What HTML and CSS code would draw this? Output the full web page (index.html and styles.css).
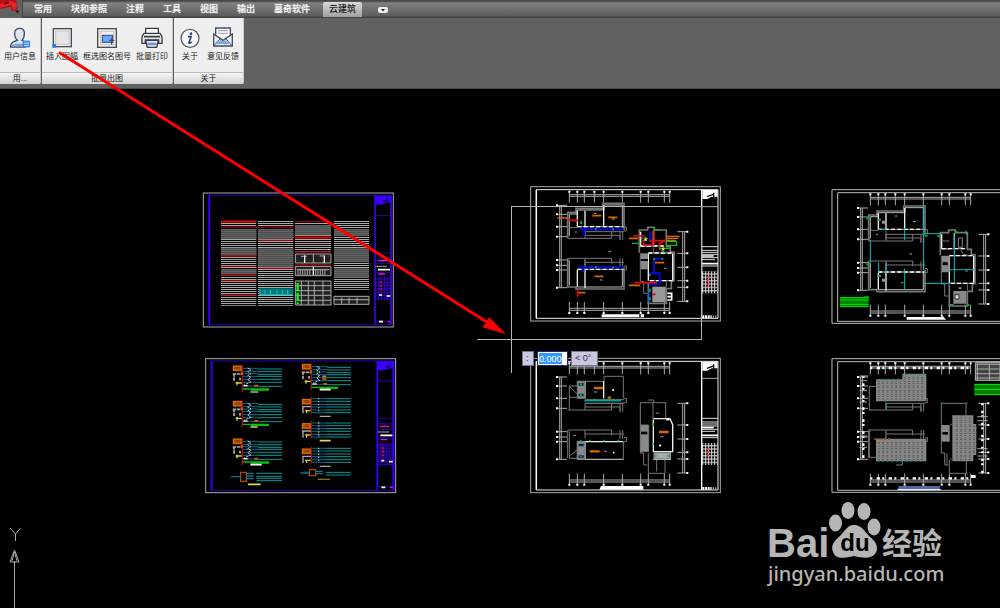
FILE: index.html
```html
<!DOCTYPE html>
<html lang="zh-CN">
<head>
<meta charset="utf-8">
<title>云建筑</title>
<link rel="stylesheet" href="styles.css">
</head>
<body>
<header class="ribbon">
  <svg class="app-logo" width="24" height="16" viewBox="0 0 72 48" aria-hidden="true">
    <path d="M0 0H48L53 30L36 33L31 20L0 27Z" fill="#b80f14"/>
    <path d="M0 13L30 2L48 8L50 27L38 29L34 14L0 24Z" fill="#e5222a"/>
    <path d="M12 8L24 3L28 10L12 15Z" fill="#741015"/>
    <path d="M46 32H59L52 40Z" fill="#111"/>
  </svg>
  <nav class="tabs">
    <button class="tab">常用</button>
    <button class="tab">块和参照</button>
    <button class="tab">注释</button>
    <button class="tab">工具</button>
    <button class="tab">视图</button>
    <button class="tab">输出</button>
    <button class="tab">墓奇软件</button>
    <button class="tab tab-active">云建筑</button>
    <button class="tab-menu" aria-label="菜单"><svg width="10" height="6" viewBox="0 0 10 6"><rect width="10" height="6" rx="2" fill="#e8ecf0"/><path d="M3 2h4L5 4.500Z" fill="#222"/></svg></button>
  </nav>
  <div class="panels">
    <section class="panel">
      <div class="tools">
        <button class="tool"><svg class="icon" viewBox="0 0 72 72"><path d="M8 60Q8 48 28 43Q19 34 20 20Q22 7 35 7Q48 7 49 20Q50 34 42 43Q50 45 52 50V63H8Z" fill="#dfe7f6" stroke="#3c4a66" stroke-width="4"/><path d="M10 57Q30 48 50 56V62H10Z" fill="#7f9fd6"/><rect x="44" y="44" width="22" height="20" fill="#3486ea"/><path d="M48 51H63M48 58H63" stroke="#d8eaff" stroke-width="3"/></svg><span>用户信息</span></button>
      </div>
      <h2 class="panel-title">用...</h2>
    </section>
    <section class="panel">
      <div class="tools">
        <button class="tool"><svg class="icon" viewBox="0 0 72 72"><rect x="10" y="8" width="54" height="54" fill="#f1f1f1" stroke="#454d58" stroke-width="4"/><rect x="17" y="15" width="40" height="40" fill="#e6e6e6" stroke="#c4c4c4" stroke-width="3"/><rect x="7" y="54" width="11" height="11" fill="#2d7bea"/></svg><span>插入图幅</span></button>
        <button class="tool"><svg class="icon" viewBox="0 0 72 72"><rect x="8" y="8" width="56" height="56" fill="#f2eee6" stroke="#454d58" stroke-width="4"/><rect x="16" y="16" width="40" height="40" fill="none" stroke="#ccc6bd" stroke-width="3"/><rect x="22" y="28" width="31" height="21" fill="#6ba7f7" stroke="#1f4a8c" stroke-width="3"/><path d="M42 43H58M50 35V57" stroke="#28466e" stroke-width="3"/></svg><span>框选图名图号</span></button>
        <button class="tool"><svg class="icon" viewBox="0 0 72 72"><path d="M17 24V7H55V24" fill="#fff" stroke="#353c46" stroke-width="4"/><path d="M12 22H60L66 31V52H56V42H16V52H6V31Z" fill="#e5e9ed" stroke="#353c46" stroke-width="4"/><path d="M12 32H60" stroke="#353c46" stroke-width="5"/><path d="M17 43H55L50 64H22Z" fill="#dce7f5" stroke="#353c46" stroke-width="4"/><path d="M22 50H50L48 58H24Z" fill="#7594c2"/></svg><span>批量打印</span></button>
      </div>
      <h2 class="panel-title">批量出图</h2>
    </section>
    <section class="panel">
      <div class="tools">
        <button class="tool"><svg class="icon" viewBox="0 0 72 72"><circle cx="36" cy="37" r="27" fill="#f8faff" stroke="#59616d" stroke-width="4"/><circle cx="39" cy="23" r="4" fill="#253e70"/><path d="M30 32H39L33 51Q36 53 41 48" fill="none" stroke="#253e70" stroke-width="5"/></svg><span>关于</span></button>
        <button class="tool"><svg class="icon" viewBox="0 0 72 72"><path d="M14 30V6H58V30" fill="#fff" stroke="#46505e" stroke-width="4"/><path d="M21 14H51M21 22H51" stroke="#9caec8" stroke-width="4"/><path d="M8 24L36 43L64 24V60H8Z" fill="#e2ecfa" stroke="#46505e" stroke-width="4"/><path d="M8 60L28 38M64 60L44 38" stroke="#46505e" stroke-width="3"/><path d="M14 54L30 42L36 46L42 42L58 54Z" fill="#84a9dc"/></svg><span>意见反馈</span></button>
      </div>
      <h2 class="panel-title">关于</h2>
    </section>
  </div>
</header>

<main class="canvas">
  <svg class="drawing" width="1000" height="519" viewBox="0 89 1000 519">
    <defs>
      <pattern id="rows" width="6" height="6" patternUnits="userSpaceOnUse"><path d="M0 1.500H6" stroke="#aaa" stroke-width="3"/></pattern>
      <pattern id="dense" width="3" height="6" patternUnits="userSpaceOnUse"><rect width="3" height="6" fill="#4c4c4c"/><path d="M0 1H3" stroke="#777" stroke-width="2"/></pattern>
      <pattern id="roof" width="13" height="13" patternUnits="userSpaceOnUse"><rect width="13" height="13" fill="#858585"/><path d="M3 4H8M3 9H8" stroke="#4c4c4c" stroke-width="3"/></pattern>
      <pattern id="grid" width="9" height="10" patternUnits="userSpaceOnUse"><path d="M0 2H9M2 0V10" stroke="#3500dc" stroke-width="3"/></pattern>
      <pattern id="wgrid" width="9" height="10" patternUnits="userSpaceOnUse"><path d="M0 2H9M2 0V10" stroke="#ddd" stroke-width="3"/></pattern>

      <g id="blue-frame" fill="none">
        <rect x="25" y="24" width="570" height="402" stroke="#aaa" stroke-width="3"/>
        <path d="M42 31H590V419H42Z" stroke="#2a00a8" stroke-width="3"/>
        <path d="M43 31V419M540 31V419M588 31V419" stroke="#3900ff" stroke-width="5"/>
        <path d="M541 32H588V52L574 54L560 59H541Z" fill="#3900ff"/>
        <path d="M565 48H578V38" stroke="#08003c" stroke-width="4"/>
        <path d="M540 91H588M540 203H588M540 219H588M540 236H588M540 262H588M540 408H588" stroke="#2a00b0" stroke-width="3"/>
        <rect x="540" y="276" width="48" height="68" fill="url(#grid)"/>
        <path d="M548 227H576M550 267H570M578 410H586" stroke="#f0f" stroke-width="4"/>
        <path d="M541 244H576" stroke="#aaa" stroke-width="3"/><path d="M549 254H585M552 330H561M575 333H586M552 410H564" stroke="#fff" stroke-width="5"/>
        <path d="M557 288V322" stroke="#c00040" stroke-width="6" stroke-dasharray="7 4"/>
      </g>

      <g id="white-frame" fill="none">
        <rect x="17" y="20" width="569" height="403" stroke="#aaa" stroke-width="3"/>
        <path d="M34 29H579V415H34Z" stroke="#eee" stroke-width="3"/><path d="M34 29V415M530 29V415" stroke="#fff" stroke-width="4"/>
        <path d="M532 30H578V50H560L547 57H532Z" fill="#fff"/><path d="M546 50L565 43M566 38V54M556 54H576" stroke="#111" stroke-width="4"/>
        <path d="M530 80H579" stroke="#aaa" stroke-width="3"/>
        <path d="M530 200H579M530 211H579M530 217H579M530 223H579M530 233H579M530 239H570M530 258H579" stroke="#ddd" stroke-width="3"/>
        <path d="M530 228H566M530 251H579" stroke="#fff" stroke-width="5"/>
        <rect x="531" y="274" width="47" height="66" fill="url(#wgrid)"/>
        <path d="M548 288V320" stroke="#e22" stroke-width="6" stroke-dasharray="6 4"/>
        <path d="M532 410H560" stroke="#fff" stroke-width="8" stroke-dasharray="6 2"/><path d="M563 410H578" stroke="#c8c" stroke-width="7" stroke-dasharray="4 3"/>
      </g>

      <g id="axes" fill="none" stroke="#aaa" stroke-width="3">
        <path d="M133 44H434M133 49H434M133 385H434M133 391H434M104 76V323M109 76V323M473 155V364M479 155V364"/>
        <path d="M133 34V68M157 34V68M178 34V68M208 34V68M236 34V68M292 34V68M347 34V68M370 34V68M418 34V68M434 34V68M133 366V400M157 366V400M178 366V400M236 366V400M292 366V400M347 366V400M370 366V400M418 366V400M434 366V400"/>
        <path d="M96 76H126M96 103H126M96 140H126M96 170H126M96 240H126M96 256H126M96 270H126M96 323H126M457 155H487M457 220H487M457 262H487M457 302H487M457 322H487M457 364H487"/>
        <path stroke="#fff" stroke-width="6" d="M130 35h6m18 0h6m15 0h6m24 0h6m22 0h6m50 0h6m49 0h6m17 0h6m42 0h6m10 0h6M130 399h6m18 0h6m15 0h6m52 0h6m50 0h6m49 0h6m17 0h6m42 0h6m10 0h6M93 76h6m-6 27h6m-6 37h6m-6 30h6m-6 70h6m-6 16h6m-6 14h6m-6 53h6M484 155h6m-6 65h6m-6 42h6m-6 40h6m-6 20h6m-6 42h6"/>
      </g>

      <g id="stairs" fill="none" stroke="#777" stroke-width="3">
        <path d="M128 175H260V155M180 155H297M180 166H285V180M285 155V180M293 155V180M128 235H260V251M128 235V320M180 235V260M180 247H297M285 235V262M293 235V262M297 140H304V153H297M297 258H304V270H297M180 175V155"/>
        <path d="M346 220V304H356V340H367"/>
      </g>

      <g id="walls" fill="none" stroke="#777" stroke-width="3">
        <path stroke-width="5" d="M128 175V97H153V85H233V70H297V150M128 235V321H153V327H297V262M343 218V150H368V142H388V150H424V200H436V216H447V303H439V326H424V370H370V306"/>
        <path d="M133 168V102H157V90H237V75H292V137M133 316V241M157 321H292V268" stroke="#bbb"/>
        <path stroke="#eee" stroke-width="4" d="M157 92V140M180 92V140M236 76V137M157 270V320M180 270V324M347 155V198H370M385 152V198M370 220V302M443 220V300"/>
        <path stroke="#777" stroke-width="4" d="M157 140H295M157 268H295M347 198H418M370 219H443M374 302H443"/>
        <path stroke="#fff" stroke-width="4" stroke-dasharray="12 7" d="M157 140H295M157 268H295M347 198H418M370 219H443M374 302H443"/>
        <path d="M133 143H157M347 175H370M385 203V218M405 203L412 215L430 218M424 305V322M180 140V170M180 240V270"/>
        <path stroke="#aaa" d="M207 100H214M260 117H270M225 300H232M418 265H425M150 156H156M250 214H258"/>
      </g>

      <g id="circuit" fill="none">
        <rect x="115" y="48" width="26" height="14" fill="#b85400" stroke="#ed7600" stroke-width="3"/>
        <path d="M122 52H135M122 57H135" stroke="#653100" stroke-width="2"/>
        <path d="M142 47V126" stroke="#b1080e" stroke-width="4"/>
        <path d="M113 72H142M117 70V92M135 83V91" stroke="#aaa" stroke-width="5" stroke-dasharray="10 2"/><path d="M122 99H140M126 95V106" stroke="#ddd719" stroke-width="4"/>
        <path d="M144 55H189M144 64H189M144 71H189M144 79H189M144 88H189M144 97H189M144 108H189" stroke="#006e91" stroke-width="3"/>
        <path d="M189 57H261M189 65H261M189 73H261M189 79H261M189 88H261M189 97H261M189 109H261" stroke="#0a9999" stroke-width="3"/>
        <path d="M158 54L168 59L158 65L168 71L158 77L168 82L158 89L168 96L148 104" stroke="#ccc" stroke-width="3" stroke-dasharray="7 3"/>
        <path d="M145 107H158" stroke="#eee" stroke-width="4"/><path d="M178 107H189M140 66V75" stroke="#d06000" stroke-width="6"/>
        <path d="M143 117H222M167 120H222" stroke="#00c310" stroke-width="4"/>
      </g>
      <g id="small-circuit" fill="none">
        <rect x="322" y="148" width="25" height="14" fill="#b85400" stroke="#ed7600" stroke-width="3"/>
        <path d="M329 152H342M329 157H342" stroke="#653100" stroke-width="2"/>
        <path d="M349 141V192" stroke="#b1080e" stroke-width="4"/><path d="M321 170H348M324 170V190" stroke="#aaa" stroke-width="4"/><path d="M330 182H347M335 180V190" stroke="#d5cf1b" stroke-width="4"/>
        <path d="M351 146H393M351 154H393M351 163H393M351 171H393M351 180H393M351 188H393" stroke="#006e91" stroke-width="3"/>
        <path d="M393 146H468M393 154H468M393 163H468M393 171H468M393 180H468M393 188H468" stroke="#0a9999" stroke-width="3"/>
        <path d="M371 144V190" stroke="#aaa" stroke-width="4" stroke-dasharray="4 5"/>
      </g>
    </defs>

    <g transform="translate(195 185) scale(.33333)">
      <use href="#blue-frame"/>
      <path d="M78 108H184V362H78ZM189 108H295V362H189ZM300 108H408V204H300ZM417 108H522V314H417Z" fill="url(#rows)"/>
      <path d="M78 132H184V162H78ZM78 188H184V212H78ZM78 252H184V268H78ZM189 132H295V162H189ZM189 190H295V246H189ZM300 120H408V151H300ZM417 132H522V154H417ZM417 190H522V232H417ZM417 250H522V278H417Z" fill="url(#dense)"/>
      <path d="M78 110H184M300 158H408" stroke="#f00" stroke-width="5"/><path d="M78 127H184M78 213H184M78 244H184M78 270H184M78 287H184M78 330H184M189 127H295M189 166H295M189 250H295M300 110H408M300 201H408M300 239H408" stroke="#990006" stroke-width="4"/>
      <path d="M192 310H294V330H192Z" fill="#007779"/><path d="M192 329H294M195 312V328M210 314V328M226 314V328M246 314V328M262 314V328M278 314V328" stroke="#00caca" stroke-width="3"/>
      <g fill="#222" stroke="#aaa" stroke-width="3"><path d="M301 207H408V234H301ZM301 244H408V272H301ZM301 288H408V360H301ZM417 334H522V358H417Z"/><path d="M318 214H335M355 208V234M374 213H390M305 254H403M309 253V272M316 253V272M323 253V272M330 253V272M337 253V272M344 253V272M362 253V272M369 253V272M376 253V272M383 253V272M390 253V272M301 302H408M301 317H408M301 331H408M301 346H408M319 288V360M340 288V360M358 288V360M384 288V360M417 344H522M440 338V358M462 338V358M486 338V358"/></g>
      <path d="M329 211V234M355 245V270M388 212V234" stroke="#eee" stroke-width="4"/><path d="M308 294V358" stroke="#11f216" stroke-width="7" stroke-dasharray="25 4"/>
    </g>

    <g transform="translate(195 350) scale(.33333)">
      <g transform="translate(7 2)"><use href="#blue-frame"/></g>
      <use href="#circuit"/><use href="#circuit" transform="translate(0 106)"/><use href="#circuit" transform="translate(0 219)"/><use href="#circuit" transform="translate(207 -5)"/>
      <use href="#small-circuit"/><use href="#small-circuit" transform="translate(0 73)"/><use href="#small-circuit" transform="translate(0 149)"/>
      <g fill="none"><path d="M166 126H190M374 199H407M374 349H407" stroke="#aaa" stroke-width="4"/><path d="M166 231H188M374 272H407M159 403H197" stroke="#d8d36d" stroke-width="5"/><path d="M166 344H200M374 119H407" stroke="#fff" stroke-width="5"/><path d="M368 388H405" stroke="#77750c" stroke-width="4"/>
      <path d="M137 367H154V394H137ZM343 359H362V377H343Z" stroke="#a64b00" stroke-width="4"/><path d="M108 380H137M156 370H176M156 378H176M156 386H176M316 369H343M363 364H384M363 371H384" stroke="#007897" stroke-width="4"/><path d="M184 370H261M184 379H261M184 385H261M184 392H261M393 367H468M393 375H468" stroke="#009999" stroke-width="3"/><path d="M382 79H394M382 87H394" stroke="#ef7500" stroke-width="5"/></g>
    </g>

    <g transform="translate(525 180) scale(.33333)">
      <use href="#white-frame"/><use href="#axes"/><use href="#stairs"/><use href="#walls"/>
      <path d="M347 220H369V268H347Z" fill="#888"/><path d="M347 240H369" stroke="#000" stroke-width="6"/><path d="M382 320H422V366H382Z" fill="#999"/>
      <g fill="none"><path d="M164 148H295M178 148V170M160 262H295M175 262V275M387 235V280H372M387 236H412M387 280H404V310M372 313H404M375 155V185M374 325V365" stroke="#0009e0" stroke-width="6"/>
      <path d="M210 148h5m47 0h5M210 262h5m47 0h5M385 237h5m20 0h5M372 285h5M168 124v9M374 327v9m0 16v9" stroke="#00b51a" stroke-width="6"/>
      <path d="M202 107H229M250 112H277M208 289H235M390 248H418M97 114H126M158 338H181M312 175H340M312 316H345" stroke="#dc6500" stroke-width="5"/><path d="M424 169H464M424 175H461M424 181H453" stroke="#e56a00" stroke-width="4"/>
      <path d="M127 121H160M158 329V350M325 168H360M387 153V195H355V180M373 182H420L404 190V210M328 308H396M382 343H392" stroke="#e80909" stroke-width="5"/>
      <path d="M321 190H346M424 184H455V196H424M385 149H402M402 205H436M362 170L357 184M414 202V215M425 340H443" stroke="#00c11b" stroke-width="4"/><path d="M359 179h7M412 207h6" stroke="#ffdf24" stroke-width="7"/><path d="M427 340H442M427 350H440M427 360H442M440 340V362" stroke="#fff" stroke-width="5"/><path d="M230 407H343M347 407H357" stroke="#fff" stroke-width="9"/></g>
    </g>

    <g transform="translate(525 350) scale(.33333)">
      <g transform="translate(0 5)"><use href="#white-frame"/><use href="#axes"/><use href="#stairs"/></g>
      <g fill="none" stroke="#777" stroke-width="3"><path d="M133 178V108H157V94H237V79H295V145M133 243V325H157M157 328H295V275M133 109L157 132M133 142H157M133 318L157 300M346 226V158H422V204M370 150H386V158M370 310V370H420V328M384 158V210M395 330V365M443 224V305M180 149H297M180 160H297"/>
      <path d="M180 94V145M236 94V145M157 275H295M180 275V328M385 210V305H443V224L435 206H385M385 328H435V305" stroke="#eee" stroke-width="4"/><path d="M157 275V328H295" stroke="#bbb"/>
      <path d="M157 94H180V145H157ZM157 275H180V328H157ZM347 225H371V305H347Z" fill="#888"/><path d="M387 308H433V327H387Z" fill="#aaa"/><path d="M348 249H367" stroke="#000" stroke-width="8"/><path d="M161 103H176M161 135H176M161 285H176M161 320H176" stroke="#002870" stroke-width="8"/><path d="M178 152H288" stroke="#00a3a3" stroke-width="5"/>
      <path d="M207 114H234M194 304H224M402 246H431M248 143H258" stroke="#d86600" stroke-width="7"/><path d="M165 103h6m-6 32h6m35 14h5m25 0h5m23 0h5M165 272h5m22 0h5m38 0h5m37 0h5M166 320h5M384 220v8m0 50v6M389 318h6m30 0h6" stroke="#00bc23" stroke-width="5"/>
      <path d="M262 118h5v4h-5ZM264 306h4v4h-4ZM403 284h5v5h-5ZM424 206h9v5h-9Z" fill="#fff" stroke="#eee" stroke-width="1"/><path d="M207 126H217M237 304H246M392 189H402M406 260H415M145 256H153" stroke="#999"/></g>
      <path d="M228 408H355V419H223Z" fill="#fff"/>
    </g>

    <g transform="translate(825 180) scale(.33333)">
      <g transform="translate(4 9)"><path d="M600 20H17V421H600M600 415H34V29H600" fill="none" stroke="#bbb" stroke-width="3"/></g>
      <g transform="translate(3 8)"><use href="#axes"/><use href="#stairs"/><use href="#walls"/></g>
      <path d="M351 227H374V277H351ZM385 333H424V371H385Z" fill="#888"/><path d="M353 251H368" stroke="#000" stroke-width="9"/><path d="M390 344H402V357H390Z" fill="#ddd" stroke="#333" stroke-width="3"/>
      <g fill="none"><path d="M136 180V247M296 73V270M297 161H347M388 163V310M373 269H447M297 310H374M161 148H183M239 148V180M161 248V278M239 265V329M183 248V278M423 151V164M375 374H386" stroke="#00bfc4" stroke-width="3"/><path d="M124 115h8m28 4h8M124 253h8m28 35h8M300 167h8m30 1h8M389 156h8M425 375h8M115 352h17" stroke="#00b317" stroke-width="6"/><path d="M400 174H412V202H400Z" stroke="#888" stroke-width="3"/><path d="M171 122h12v9h-12ZM171 296h12v9h-12ZM401 322h8v5h-8Z" fill="#999"/></g>
      <path d="M45 351H131V381H45Z" fill="#008000"/><path d="M45 353H131M45 360H131M45 373H131M45 380H131" stroke="#00e500" stroke-width="3"/><path d="M245 411H353V407L363 419H245Z" fill="#fff"/>
    </g>

    <g transform="translate(825 350) scale(.33333)">
      <g transform="translate(4 6)"><path d="M600 20H17V421H600M600 415H34V29H600" fill="none" stroke="#bbb" stroke-width="3"/></g>
      <g transform="translate(3 5)"><use href="#axes"/><use href="#stairs"/></g>
      <g fill="none"><path d="M136 54H438M136 385H438" stroke="#fff" stroke-width="7" stroke-dasharray="6 13 10 7"/><path d="M115 78V330M472 160V370" stroke="#fff" stroke-width="7" stroke-dasharray="6 16 8 6"/><path d="M104 78H130M104 92H126M104 122H126M104 156H126M104 258H126M104 292H126M457 200H488M457 212H488M457 296H488M457 318H488" stroke="#aaa" stroke-width="3"/>
      <path d="M133 178V109H155M133 243V322H155M349 225V160H423V200M373 330V370H424V332M183 158V178M213 345H232V333M366 310V346" stroke="#777" stroke-width="3"/>
      <path d="M155 90H234V73H302V152H155ZM155 268H302V332H155ZM384 198H443V224H452V313H443V332H384Z" fill="url(#roof)"/><path d="M155 90H234V73H302V152H155ZM155 268H302V332H155ZM384 198H443V224H452V313H443V332H384Z" stroke="#858585" stroke-width="4"/><path d="M349 225H374V275H349Z" fill="#888"/><path d="M352 250H369" stroke="#000" stroke-width="8"/>
      <path d="M160 88H232M240 73H300M183 152V175M183 245V268M158 333H298M375 223H385M375 328H385M132 109h5m-5 70h5M132 243h5m210-84h5m70 0h5m-54 211h5m45 0h5" stroke="#008a8e" stroke-width="4" stroke-dasharray="5 9"/><path d="M147 267H195" stroke="#b34c00" stroke-width="4" stroke-dasharray="8 6"/></g>
      <path d="M448 102H525V135H448Z" fill="#008000"/><path d="M448 103H525M448 118H525M448 133H525" stroke="#00ef00" stroke-width="3"/><path d="M451 38H525V91H451Z" fill="#444" stroke="#bbb" stroke-width="3"/><path d="M451 43H525M451 57H525M451 71H525M451 84H525M457 42V90M493 42V90" stroke="#aaa" stroke-width="3"/><path d="M222 408H345V418H218Z" fill="#5268ac"/><path d="M218 419H347" stroke="#eee" stroke-width="4"/><path d="M438 375H452V384H438Z" fill="#fff"/>
    </g>

    <g class="crosshair"><path d="M511.500 206V373M477 339.500H701M511 206.500H701M701.500 206V340"/></g>
    <g fill="none" stroke="#aaa"><path d="M10 528L15.500 534V541M20.500 528L15.500 534M14.500 561V608M14.500 550L10 562H19ZM14.500 552L12 561M14.500 552L17 561"/></g>

    <g class="watermark">
      <text x="767" y="557" class="brand">Bai</text>
      <ellipse cx="835.500" cy="523" rx="6.500" ry="8.500"/><ellipse cx="848" cy="510.500" rx="6.500" ry="8.500"/><ellipse cx="864" cy="511.500" rx="6.500" ry="8.500"/><ellipse cx="874" cy="527" rx="6.500" ry="8.500"/>
      <path d="M854 525C862 525 865 532 870 537C877 542 879 549 875 554C871 559 863 558 854 556C844 558 836 560 833 552C830 545 835 540 840 536C845 531 847 525 854 525Z"/>
      <text x="855" y="551" text-anchor="middle" class="du">du</text>
      <text x="882" y="554" class="experience">经验</text>
      <text x="768" y="581" class="address">jingyan.baidu.com</text>
    </g>
  </svg>
  <form class="coordinate">
    <label for="distance">:</label>
    <span class="field"><input id="distance" value="0.000"></span>
    <output>&lt; 0°</output>
  </form>
</main>
<svg class="pointer" width="520" height="345" viewBox="0 0 520 345" aria-hidden="true"><path d="M60 53L490 324" stroke="#f00" stroke-width="3" stroke-linecap="round"/><path d="M506 334L489 317L487 322L482 327Z" fill="#f00"/></svg>
</body>
</html>
```
FILE: styles.css
```css
* { box-sizing: border-box; }
body {
  margin: 0;
  min-height: 100vh;
  display: flex;
  flex-direction: column;
  position: relative;
  background: #000;
  font-family: "Liberation Sans", "Noto Sans CJK SC", sans-serif;
}
button {
  border: 0;
  padding: 0;
  background: none;
  font: inherit;
  color: inherit;
}
.ribbon {
  position: relative;
  height: 89px;
  background: #616161;
  border-bottom: 1px solid #484848;
}
.app-logo { position: absolute; left: 0; top: 0; }
.tabs {
  display: flex;
  gap: 7px;
  height: 18px;
  margin-left: 22px;
  padding: 2px 0 0 5px;
  background: linear-gradient(#484848 0 1px, #808080 3px, #5c5c5c 16px, #444 17px);
  border-left: 1px solid #444;
  color: #f2f2f2;
  font-size: 9px;
  font-weight: 500;
}
.tab {
  height: 15px;
  padding: 0 6px;
  line-height: 15px;
  white-space: nowrap;
  text-shadow: 0 0 1px #ddd;
}
.tab-active {
  color: #222;
  background: linear-gradient(#d9d9d9, #a0a0a0);
  border-radius: 2px 2px 0 0;
  text-shadow: none;
}
.tab-menu { display: flex; align-items: center; margin-left: 9px; }
.panels { display: flex; gap: 1px; }
.panel {
  display: flex;
  flex-direction: column;
  background: #efefef;
  border-right: 1px solid #c8c8c8;
  border-radius: 0 0 2px 2px;
  color: #222;
  font-size: 8px;
}
.tools {
  display: flex;
  gap: 5px;
  height: 54px;
  padding: 8px 4px 0;
}
.tool {
  display: flex;
  flex-direction: column;
  align-items: center;
  gap: 1px;
  min-width: 24px;
  line-height: 12px;
  white-space: nowrap;
}
.icon { width: 24px; height: 24px; }
.panel-title {
  margin: 0;
  height: 12px;
  border-top: 1px solid #bbb;
  background: linear-gradient(#f5f5f5, #cfd3d3);
  font-size: 8px;
  line-height: 12px;
  font-weight: 400;
  text-align: center;
}
.canvas { position: relative; flex: 1; overflow: hidden; background: #000; }
.drawing { display: block; }
.crosshair { fill: none; stroke: #b5b5b5; }
.watermark { fill: #b5b5b5; }
.brand { font: 700 40px "Liberation Sans", sans-serif; }
.du { font: 700 24px "Liberation Sans", sans-serif; fill: #000; }
.experience { font: 700 30px "Noto Sans CJK SC", sans-serif; }
.address { font: 500 20px "Noto Sans", sans-serif; }
.coordinate {
  position: absolute;
  left: 522px;
  top: 262px;
  display: flex;
  gap: 3px;
  height: 15px;
  color: #30324d;
  font-size: 9px;
  line-height: 13px;
}
.coordinate label, .coordinate output {
  padding: 0 3px;
  border: 1px solid #747499;
  background: #c8c8df;
}
.coordinate label { width: 12px; }
.coordinate output { width: 27px; white-space: nowrap; }
.field { width: 31px; padding: 1px; border: 1px solid #24246c; background: #fff; }
.field input {
  display: block;
  width: 23px;
  height: 11px;
  padding: 0;
  border: 0;
  background: #3399ff;
  color: #fff;
  font: 9px "Liberation Sans", sans-serif;
}
.pointer { position: absolute; left: 0; top: 0; pointer-events: none; }
```
